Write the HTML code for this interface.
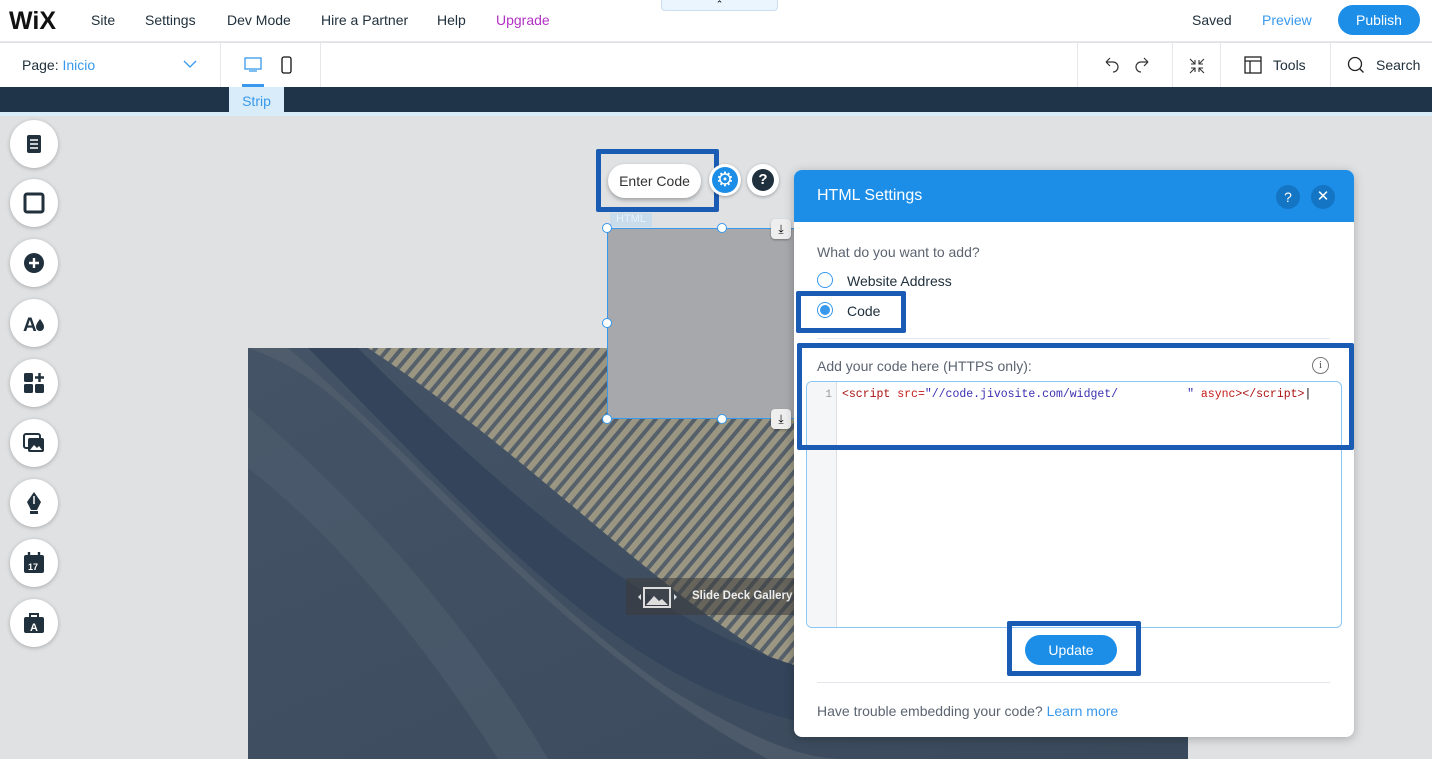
<!DOCTYPE html>
<html><head><style>
*{box-sizing:border-box;margin:0;padding:0}
body{width:1432px;height:759px;overflow:hidden;font-family:"Liberation Sans",sans-serif;background:#dfe1e3;position:relative}
.abs{position:absolute}
.top{left:0;top:0;width:1432px;height:42px;background:#fff;border-bottom:1px solid #e6e8eb}
.top span{position:absolute;top:12px;font-size:14px;color:#20303c}
.bar2{left:0;top:43px;width:1432px;height:44px;background:#fff}
.dark{left:0;top:87px;width:1432px;height:25px;background:#1f3448}
.side{left:10px;width:48px;height:48px;border-radius:50%;background:#fff;box-shadow:0 1px 4px rgba(0,0,0,.25)}
.side svg{position:absolute;left:12px;top:12px}
.blue{border:5px solid #1a5cb4;border-radius:2px}
</style></head><body>
<div class="abs top">
<span style="left:9px;top:7px;font-size:25px;font-weight:bold;color:#111;letter-spacing:0px">WiX</span>
<span style="left:91px">Site</span><span style="left:145px">Settings</span><span style="left:227px">Dev Mode</span><span style="left:321px">Hire a Partner</span><span style="left:437px">Help</span><span style="left:496px;color:#b331c5">Upgrade</span>
<span style="left:1192px">Saved</span><span style="left:1262px;color:#3899ec">Preview</span>
<div class="abs" style="left:1338px;top:5px;width:82px;height:30px;border-radius:15px;background:#1c8ee8;color:#fff;font-size:14px;text-align:center;line-height:30px">Publish</div>
</div>
<div class="abs" style="left:661px;top:0;width:117px;height:11px;background:#eaf5fd;border:1px solid #cde;border-top:none;border-radius:0 0 4px 4px;font-size:9px;text-align:center;line-height:8px">⌃</div>
<div class="abs bar2">
<span class="abs" style="left:22px;top:14px;font-size:14px;color:#20303c">Page: <span style="color:#3899ec">Inicio</span></span>
<svg class="abs" style="left:183px;top:17px" width="14" height="9"><path d="M1 1l6 6 6-6" fill="none" stroke="#3899ec" stroke-width="1.3"/></svg>
<div class="abs" style="left:220px;top:0;width:1px;height:44px;background:#e6e8eb"></div>
<svg class="abs" style="left:244px;top:14px" width="20" height="16"><rect x="1" y="1" width="16" height="11" fill="none" stroke="#3899ec" stroke-width="1.3"/><path d="M5 14h8" stroke="#3899ec" stroke-width="1.3"/></svg>
<div class="abs" style="left:242px;top:41px;width:22px;height:3px;background:#3899ec"></div>
<svg class="abs" style="left:281px;top:13px" width="12" height="19"><rect x="1" y="1" width="9" height="16" rx="2" fill="none" stroke="#111" stroke-width="1.3"/></svg>
<div class="abs" style="left:320px;top:0;width:1px;height:44px;background:#e6e8eb"></div>
<div class="abs" style="left:1077px;top:0;width:1px;height:44px;background:#e6e8eb"></div>
<svg class="abs" style="left:1102px;top:14px" width="50" height="18"><path d="M4 5h7a5 5 0 010 10M4 5l4-4M4 5l4 4" fill="none" stroke="#333" stroke-width="1.2"/><path d="M46 5h-7a5 5 0 000 10M46 5l-4-4M46 5l-4 4" fill="none" stroke="#333" stroke-width="1.2"/></svg>
<div class="abs" style="left:1172px;top:0;width:1px;height:44px;background:#e6e8eb"></div>
<svg class="abs" style="left:1188px;top:14px" width="18" height="18"><path d="M2 2l5 5M7 3v4H3M16 2l-5 5M11 3v4h4M2 16l5-5M3 11h4v4M16 16l-5-5M15 11h-4v4" fill="none" stroke="#333" stroke-width="1.1"/></svg>
<div class="abs" style="left:1220px;top:0;width:1px;height:44px;background:#e6e8eb"></div>
<svg class="abs" style="left:1244px;top:13px" width="18" height="18"><rect x="1" y="1" width="16" height="16" fill="none" stroke="#222" stroke-width="1.3"/><path d="M1 5h16M6 5v12" stroke="#222" stroke-width="1.3"/></svg>
<span class="abs" style="left:1273px;top:14px;font-size:14px;color:#20303c">Tools</span>
<div class="abs" style="left:1330px;top:0;width:1px;height:44px;background:#e6e8eb"></div>
<svg class="abs" style="left:1347px;top:13px" width="18" height="18"><circle cx="8" cy="8" r="6.5" fill="none" stroke="#222" stroke-width="1.3"/><path d="M12.5 12.5l4 4" stroke="#222" stroke-width="1.3"/></svg>
<span class="abs" style="left:1376px;top:14px;font-size:14px;color:#20303c">Search</span>
</div>
<div class="abs dark"></div>
<div class="abs" style="left:0;top:112px;width:1432px;height:4px;background:#d8ecf9"></div>
<div class="abs" style="left:229px;top:87px;width:55px;height:26px;background:#d8ecf9;color:#3899ec;font-size:14px;text-align:center;line-height:28px">Strip</div>

<div class="abs side" style="top:120px"><svg width="24" height="24"><rect x="5" y="3" width="14" height="18" rx="2" fill="#20303c"/><path d="M8 8h8M8 12h8M8 16h8" stroke="#fff" stroke-width="1.5"/></svg></div>
<div class="abs side" style="top:179px"><svg width="24" height="24"><rect x="3" y="3" width="18" height="18" rx="2" fill="none" stroke="#20303c" stroke-width="3"/></svg></div>
<div class="abs side" style="top:239px"><svg width="24" height="24"><circle cx="12" cy="12" r="10" fill="#20303c"/><path d="M12 7v10M7 12h10" stroke="#fff" stroke-width="2.4"/></svg></div>
<div class="abs side" style="top:299px"><svg width="24" height="24"><text x="1" y="20" font-size="19" font-weight="bold" fill="#20303c" font-family="Liberation Sans">A</text><path d="M18 8c3 4 4 6 4 8a4 4 0 01-8 0c0-2 1-4 4-8z" fill="#20303c"/></svg></div>
<div class="abs side" style="top:359px"><svg width="24" height="24"><rect x="2" y="2" width="9" height="9" rx="1.5" fill="#20303c"/><rect x="2" y="13" width="9" height="9" rx="1.5" fill="#20303c"/><rect x="13" y="13" width="9" height="9" rx="1.5" fill="#20303c"/><path d="M17.5 2v9M13 6.5h9" stroke="#20303c" stroke-width="2.5"/></svg></div>
<div class="abs side" style="top:419px"><svg width="24" height="24"><rect x="2" y="3" width="16" height="14" rx="2" fill="none" stroke="#20303c" stroke-width="2"/><rect x="6" y="7" width="16" height="14" rx="2" fill="#20303c"/><path d="M8 19l4-5 3 3 2-2 3 4z" fill="#fff"/></svg></div>
<div class="abs side" style="top:479px"><svg width="24" height="24"><path d="M12 1l7 10-4 8H9L5 11z" fill="#20303c"/><path d="M12 5v8" stroke="#fff" stroke-width="1.5"/><rect x="8" y="20" width="8" height="3" fill="#20303c"/></svg></div>
<div class="abs side" style="top:539px"><svg width="24" height="24"><rect x="2" y="4" width="20" height="18" rx="2" fill="#20303c"/><path d="M7 1v5M17 1v5" stroke="#20303c" stroke-width="2.4"/><text x="6" y="19" font-size="9" font-weight="bold" fill="#fff" font-family="Liberation Sans">17</text></svg></div>
<div class="abs side" style="top:599px"><svg width="24" height="24"><rect x="2" y="6" width="20" height="16" rx="2" fill="#20303c"/><path d="M8 6V3h8v3" fill="none" stroke="#20303c" stroke-width="2"/><text x="8" y="20" font-size="11" font-weight="bold" fill="#fff" font-family="Liberation Sans">A</text></svg></div>

<svg class="abs" style="left:248px;top:348px" width="940" height="411">
<defs><linearGradient id="g" x1="0" y1="0" x2="1" y2="1"><stop offset="0" stop-color="#445466"/><stop offset="1" stop-color="#3a4a5c"/></linearGradient>
<pattern id="p" width="10" height="10" patternUnits="userSpaceOnUse" patternTransform="rotate(40)"><rect width="10" height="10" fill="#56606a"/><rect width="6" height="10" fill="#9a9682"/></pattern></defs>
<rect width="940" height="411" fill="url(#g)"/>
<path d="M120 0C300 120 420 260 560 330C700 390 860 330 940 200V0z" fill="url(#p)"/>
<path d="M110 0C250 140 380 250 500 300C640 360 800 350 940 290V320C800 400 620 410 480 350C330 290 200 140 60 0z" fill="#34445a"/>
<path d="M40 0C180 120 300 260 420 340C520 400 560 411 600 411H520C420 360 300 260 160 120C100 60 60 20 0 0z" fill="#52606e" opacity=".7"/>
<path d="M0 60C120 160 230 290 300 411H250C180 300 90 190 0 120z" fill="#4f5e6e" opacity=".6"/>
</svg>
<div class="abs" style="left:626px;top:578px;width:170px;height:37px;background:rgba(60,60,60,.55);color:#eee;font-size:11.5px;font-weight:bold;line-height:37px;padding-left:66px;white-space:nowrap;overflow:hidden">Slide Deck Gallery</div>
<svg class="abs" style="left:634px;top:586px" width="56" height="22"><path d="M4 11l3-3v6z" fill="#ddd"/><rect x="10" y="2" width="26" height="19" fill="none" stroke="#ddd" stroke-width="2"/><path d="M12 19l8-9 5 5 3-2 6 6z" fill="#ddd"/><path d="M40 8l3 3-3 3z" fill="#ddd"/></svg>

<div class="abs" style="left:607px;top:228px;width:230px;height:191px;background:#a6a8ab;border:1px solid #3899ec"></div>
<div class="abs" style="left:610px;top:213px;width:42px;height:14px;background:#c8dcec;color:#e9f2fa;font-size:11px;text-align:center">HTML</div>
<div class="abs" style="left:602px;top:223px;width:10px;height:10px;border-radius:50%;background:#fff;border:1.5px solid #3899ec"></div>
<div class="abs" style="left:717px;top:223px;width:10px;height:10px;border-radius:50%;background:#fff;border:1.5px solid #3899ec"></div>
<div class="abs" style="left:602px;top:318px;width:10px;height:10px;border-radius:50%;background:#fff;border:1.5px solid #3899ec"></div>
<div class="abs" style="left:602px;top:414px;width:10px;height:10px;border-radius:50%;background:#fff;border:1.5px solid #3899ec"></div>
<div class="abs" style="left:717px;top:414px;width:10px;height:10px;border-radius:50%;background:#fff;border:1.5px solid #3899ec"></div>
<div class="abs" style="left:771px;top:219px;width:20px;height:20px;border-radius:4px;background:#eee;box-shadow:0 1px 2px rgba(0,0,0,.3);font-size:12px;text-align:center;line-height:20px">⤓</div>
<div class="abs" style="left:771px;top:409px;width:20px;height:20px;border-radius:4px;background:#eee;box-shadow:0 1px 2px rgba(0,0,0,.3);font-size:12px;text-align:center;line-height:20px">⤓</div>

<div class="abs blue" style="left:596px;top:149px;width:123px;height:63px"></div>
<div class="abs" style="left:608px;top:164px;width:93px;height:34px;border-radius:17px;background:#fff;box-shadow:0 2px 4px rgba(0,0,0,.3);font-size:14px;color:#333;text-align:center;line-height:34px">Enter Code</div>
<div class="abs" style="left:709px;top:164px;width:32px;height:32px;border-radius:50%;background:#fff;box-shadow:0 1px 3px rgba(0,0,0,.3)"><div style="position:absolute;left:3px;top:3px;width:26px;height:26px;border-radius:50%;background:#1c8ee8;color:#fff;font-size:20px;text-align:center;line-height:26px">⚙</div></div>
<div class="abs" style="left:747px;top:164px;width:32px;height:32px;border-radius:50%;background:#fff;box-shadow:0 1px 3px rgba(0,0,0,.3)"><div style="position:absolute;left:5px;top:5px;width:22px;height:22px;border-radius:50%;background:#20303c;color:#fff;font-size:15px;font-weight:bold;text-align:center;line-height:22px">?</div></div>

<div class="abs" style="left:794px;top:170px;width:560px;height:567px;background:#fff;border-radius:8px;box-shadow:0 2px 10px rgba(0,0,0,.25);overflow:hidden">
<div class="abs" style="left:0;top:0;width:560px;height:52px;background:#1c8ee8"></div>
<span class="abs" style="left:23px;top:17px;font-size:16px;color:#fff">HTML Settings</span>
<div class="abs" style="left:482px;top:15px;width:24px;height:24px;border-radius:50%;background:#1475c4;color:#fff;font-size:14px;text-align:center;line-height:24px">?</div>
<div class="abs" style="left:517px;top:15px;width:24px;height:24px;border-radius:50%;background:#1475c4;color:#fff;font-size:15px;text-align:center;line-height:24px">✕</div>
<span class="abs" style="left:23px;top:74px;font-size:14px;color:#5b6470">What do you want to add?</span>
<div class="abs" style="left:23px;top:102px;width:16px;height:16px;border-radius:50%;border:1.5px solid #3899ec"></div>
<span class="abs" style="left:53px;top:103px;font-size:14px;color:#20303c">Website Address</span>
<div class="abs" style="left:23px;top:132px;width:16px;height:16px;border-radius:50%;border:1.5px solid #3899ec;padding:2px"><div style="width:10px;height:10px;border-radius:50%;background:#3899ec"></div></div>
<span class="abs" style="left:53px;top:133px;font-size:14px;color:#20303c">Code</span>
<div class="abs" style="left:23px;top:168px;width:513px;height:1px;background:#e3e6ea"></div>
<span class="abs" style="left:23px;top:188px;font-size:14px;color:#5b6470">Add your code here (HTTPS only):</span>
<div class="abs" style="left:518px;top:187px;width:17px;height:17px;border-radius:50%;border:1px solid #777;font-size:11px;color:#555;text-align:center;line-height:15px;font-family:'Liberation Serif',serif">i</div>
<div class="abs" style="left:12px;top:211px;width:536px;height:247px;border:1px solid #8cc6f2;border-radius:6px;overflow:hidden">
<div class="abs" style="left:0;top:0;width:30px;height:247px;background:#f5f6f7;border-right:1px solid #e0e0e0;font-family:'Liberation Mono',monospace;font-size:11px;color:#999;text-align:right;padding:7px 4px 0 0">1</div>
<div class="abs" style="left:35px;top:6px;font-family:'Liberation Mono',monospace;font-size:11.5px;white-space:pre;color:#c41a16"><span style="color:#a11">&lt;script</span> <span style="color:#c41a16">src</span>=<span style="color:#3a2fb0">"//code.jivosite.com/widget/          "</span> async<span style="color:#a11">&gt;&lt;/script&gt;</span><span style="color:#000">|</span></div>
</div>
<div class="abs" style="left:231px;top:465px;width:92px;height:30px;border-radius:15px;background:#1c8ee8;color:#fff;font-size:14px;text-align:center;line-height:30px">Update</div>
<div class="abs" style="left:23px;top:512px;width:513px;height:1px;background:#e3e6ea"></div>
<span class="abs" style="left:23px;top:533px;font-size:14px;color:#5b6470">Have trouble embedding your code? <span style="color:#3899ec">Learn more</span></span>
</div>
<div class="abs blue" style="left:796px;top:291px;width:110px;height:42px"></div>
<div class="abs blue" style="left:797px;top:343px;width:557px;height:107px"></div>
<div class="abs blue" style="left:1007px;top:621px;width:134px;height:55px"></div>
</body></html>
